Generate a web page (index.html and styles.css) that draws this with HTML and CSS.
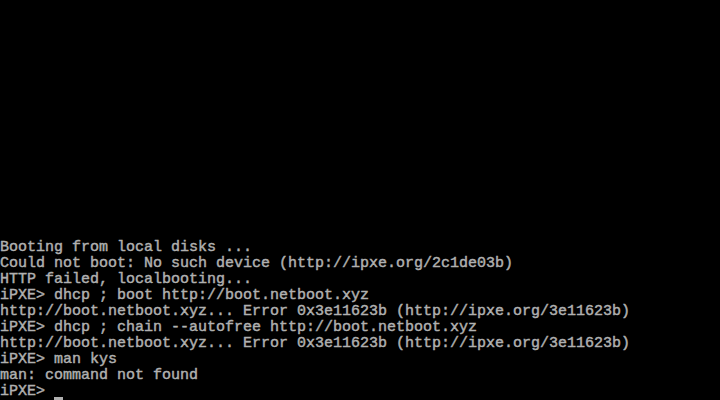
FILE: index.html
```html
<!DOCTYPE html>
<html>
<head>
<meta charset="utf-8">
<link rel="stylesheet" href="styles.css">
</head>
<body>
<div class="screen">
<pre class="console">Booting from local disks ...
Could not boot: No such device (http://ipxe.org/2c1de03b)
HTTP failed, localbooting...
iPXE&gt; dhcp ; boot http://boot.netboot.xyz
http://boot.netboot.xyz... Error 0x3e11623b (http://ipxe.org/3e11623b)
iPXE&gt; dhcp ; chain --autofree http://boot.netboot.xyz
http://boot.netboot.xyz... Error 0x3e11623b (http://ipxe.org/3e11623b)
iPXE&gt; man kys
man: command not found
iPXE&gt; <span class="cursor"> </span></pre>
</div>
</body>
</html>
```
FILE: styles.css
```css
html, body {
  margin: 0;
  padding: 0;
  background: #000;
  width: 720px;
  height: 400px;
  overflow: hidden;
}
.screen {
  width: 720px;
  height: 400px;
  display: flex;
  flex-direction: column;
  justify-content: flex-end;
}
.console {
  margin: 0;
  font-family: "Liberation Mono", "DejaVu Sans Mono", monospace;
  font-size: 15px;
  line-height: 16px;
  color: #b0b0b0;
  white-space: pre;
  -webkit-text-stroke: 0.45px #b0b0b0;
}
.cursor {
  display: inline-block;
  width: 9px;
  height: 16px;
  vertical-align: top;
  background: linear-gradient(to bottom, transparent 13px, #b0b0b0 13px, #b0b0b0 16px);
}
```
